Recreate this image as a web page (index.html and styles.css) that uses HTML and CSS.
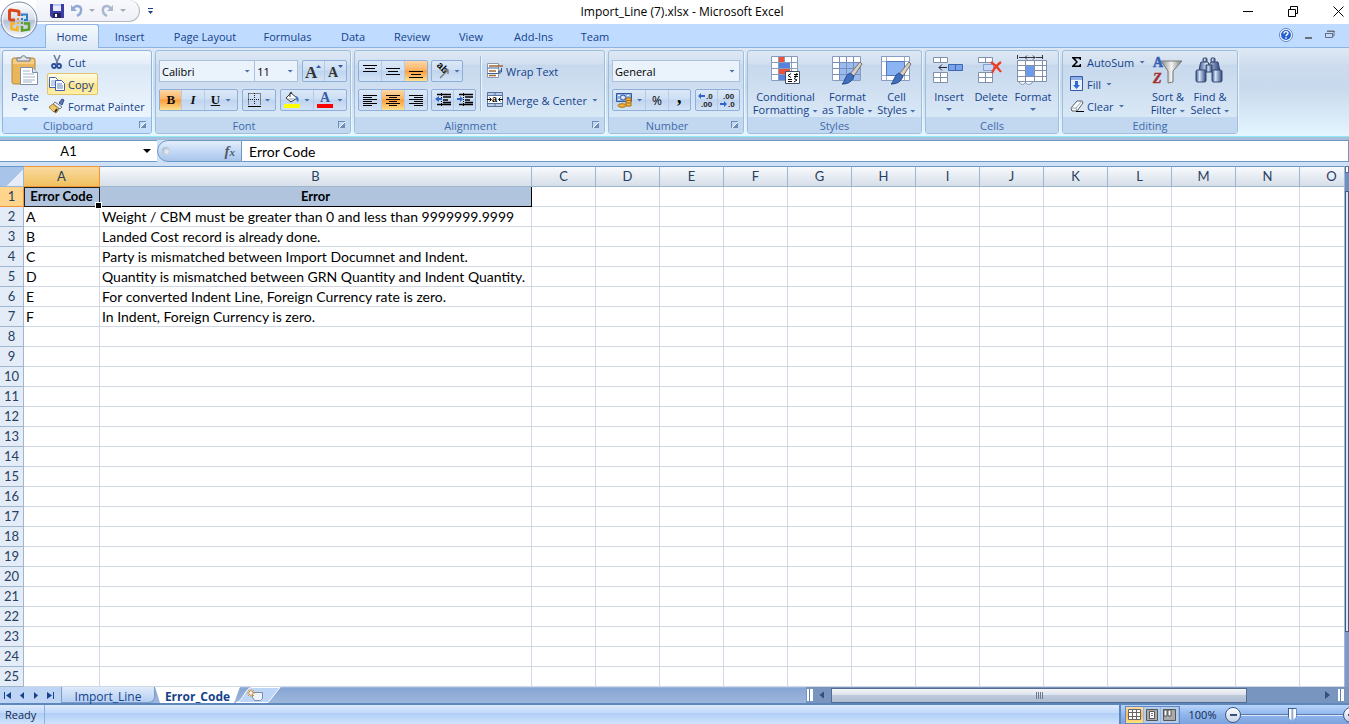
FILE: index.html
```
<!DOCTYPE html>
<html lang="en">
<head>
<meta charset="utf-8">
<title>Import_Line (7).xlsx - Microsoft Excel</title>
<link rel="stylesheet" href="styles.css">
</head>
<body>
<div class="app">
  <header class="titlebar">
    <div class="qat">
      <button aria-label="Save"><svg width="14" height="14" viewBox="0 0 14 14"><path d="M0 0h14v14H2l-2-2z" fill="#3d3da6"/><path d="M3 0h8v7H3z" fill="#e6ecfa"/><path d="M3 0h8v2H3z" fill="#b8c8ee"/><path d="M3 9h8v5H3z" fill="#23235f"/><path d="M5 10h2v3H5z" fill="#fff"/></svg></button>
      <button aria-label="Undo"><svg width="13" height="13" viewBox="0 0 13 13"><path d="M1 1v6h6z" fill="#93a9cf"/><path d="M3 5C6 0 12 2 11 7c0 3-2 4-4 5" fill="none" stroke="#93a9cf" stroke-width="2.400"/></svg></button>
      <i class="ar gray"></i>
      <button aria-label="Redo"><svg width="13" height="13" viewBox="0 0 13 13"><path d="M12 1v6H6z" fill="#a9b8d0"/><path d="M10 5C7 0 1 2 2 7c0 3 2 4 4 5" fill="none" stroke="#a9b8d0" stroke-width="2.400"/></svg></button>
      <i class="ar gray"></i>
    </div>
    <button class="more" aria-label="Customize Quick Access Toolbar"><svg width="5" height="6" viewBox="0 0 5 6"><path d="M0 0h5v1H0zM0 3h5L2.500 6z" fill="#1e3f86"/></svg></button>
    <h1>Import_Line (7).xlsx - Microsoft Excel</h1>
    <div class="winbtns">
      <button aria-label="Minimize"><svg width="11" height="11" viewBox="0 0 11 11"><path d="M0 5h10v1H0z"/></svg></button>
      <button aria-label="Restore"><svg width="11" height="11" viewBox="0 0 11 11" fill="none" stroke="#000"><path d="M.5 3.500h7v7h-7zM2.500 3V.5h7v7H8"/></svg></button>
      <button aria-label="Close"><svg width="11" height="11" viewBox="0 0 11 11" fill="none" stroke="#000"><path d="M.5.5l10 10M10.500.5l-10 10"/></svg></button>
    </div>
    <button class="office" aria-label="Office Button"><svg width="39" height="40" viewBox="0 0 39 40">
      <defs><linearGradient id="orb" x1="0" y1="0" x2="0" y2="1"><stop offset="0" stop-color="#fff"/><stop offset=".48" stop-color="#d8deea"/><stop offset=".52" stop-color="#b4bfd4"/><stop offset="1" stop-color="#fafcff"/></linearGradient></defs>
      <circle cx="19" cy="20" r="18" fill="url(#orb)" stroke="#7588a8"/><circle cx="19" cy="20" r="16.500" fill="none" stroke="#fff" opacity=".8"/>
      <g fill="none" stroke-width="3"><path d="M15 20H11q-1.500 0-1.500-1.500V11q0-1 1-1l7 1q1.500 0 1.500 1.500V16" stroke="#d9481c"/><path d="M22 16v-1.500h5V20h-3" stroke="#2c7fc8" stroke-width="2"/><path d="M15 23.500h-3.500V29l6 1.200V26" stroke="#f4b51e" stroke-width="2.500"/><path d="M22 26v4.500l7-1v-6h-5" stroke="#5a9e2c" stroke-width="2.500"/></g>
      <path d="M17 18h2v2h-2z" fill="#e88a2a"/><path d="M21 18h2v2h-2z" fill="#2c7fc8"/><path d="M17 22h2v2h-2z" fill="#f4b51e"/><path d="M21 22h2v2h-2z" fill="#5a9e2c"/></svg></button>
  </header>

  <nav class="tabs">
    <button class="tab on">Home</button><button class="tab t2">Insert</button><button class="tab t3">Page Layout</button><button class="tab t4">Formulas</button><button class="tab t5">Data</button><button class="tab t6">Review</button><button class="tab t5">View</button><button class="tab t7">Add-Ins</button><button class="tab t8">Team</button>
    <div class="docbtns">
      <button aria-label="Help"><svg width="14" height="14" viewBox="0 0 14 14"><circle cx="7" cy="7" r="6.500" fill="#fff" stroke="#5c86c4"/><circle cx="7" cy="7" r="5" fill="#2460cf"/><path d="M5 5.500C5 3 9 3 9 5.200 9 6.600 7 6.600 7 8.200M7 9.300v1.400" fill="none" stroke="#fff" stroke-width="1.400"/></svg></button>
      <button aria-label="Minimize window"><svg width="8" height="10" viewBox="0 0 8 10"><path d="M0 7h7v2H0z" fill="#6a6f7a"/></svg></button>
      <button aria-label="Restore window"><svg width="10" height="10" viewBox="0 0 10 10"><path d="M2 1h7v5H8M.5 3.500h7v4h-7z" fill="none" stroke="#6a6f7a"/><path d="M2 1h8v1H2zM0 3h8v1H0z" fill="#6a6f7a"/></svg></button>
    </div>
  </nav>

  <main class="ribbon">
    <section class="group clip">
      <div class="body">
        <button class="big paste"><svg width="28" height="32" viewBox="0 0 28 32"><rect x="1" y="3" width="23" height="26" rx="2" fill="#e9b65c" stroke="#b98a3d"/><path d="M2 4h21v5H2z" fill="#f4cd86"/><path d="M6 6V3h4c0-3 5-3 5 0h4v3z" fill="#dfe3ea" stroke="#6d7684"/><path d="M9.500 12.500h12l5 5v12h-17z" fill="#fff" stroke="#7d8da6"/><path d="M21.500 12.500v5h5" fill="#dbe4f1" stroke="#7d8da6"/><path d="M12 16h7M12 19h11M12 22h12M12 25h12M12 27h9" stroke="#9fb2cc"/></svg><span>Paste</span><i class="ar"></i></button>
        <div class="list">
          <button class="cmd"><svg width="16" height="16" viewBox="0 0 16 16"><path d="M5 1l4 9M11 1L7 10" stroke="#6b7f9c" stroke-width="1.600"/><circle cx="5" cy="12" r="2" fill="none" stroke="#2a4f97" stroke-width="1.800"/><circle cx="10" cy="12" r="2" fill="none" stroke="#2a4f97" stroke-width="1.800"/></svg>Cut</button>
          <button class="cmd hot"><svg width="16" height="16" viewBox="0 0 16 16"><path d="M.5 1.500h6l2 2v8h-8z" fill="#fff" stroke="#3e64ad"/><path d="M2 5h4M2 7h4M2 9h4" stroke="#7fa0d8"/><path d="M6.500 4.500h6l3 3v7h-9z" fill="#fff" stroke="#3e64ad"/><path d="M8 8h5M8 10h6M8 12h6" stroke="#5a83cb"/></svg>Copy</button>
          <button class="cmd"><svg width="16" height="16" viewBox="0 0 16 16"><path d="M10 5l3-4 2 1-2 5z" fill="#6077b8" stroke="#36488a"/><path d="M6 4l7 5-2 2-7-5z" fill="#e8ecf2" stroke="#707a8a"/><path d="M4 6l6 5-3 4c-2-1-5-3-7-6z" fill="#f0c766" stroke="#a8823c"/><path d="M6 14l2-3" stroke="#333" stroke-width="2"/></svg>Format Painter</button>
        </div>
      </div>
      <footer>Clipboard<button class="dlg" aria-label="Clipboard options"></button></footer>
    </section>

    <section class="group font">
      <div class="body rows">
        <div class="row">
          <div class="combos"><label class="combo name"><input value="Calibri" aria-label="Font"><i class="ar"></i></label><label class="combo size"><input value="11" aria-label="Font size"><i class="ar"></i></label></div>
          <div class="set w45"><button aria-label="Grow font"><b class="glyph g17">A</b><i class="up"></i></button><button aria-label="Shrink font"><b class="glyph g13">A</b><i class="dn"></i></button></div>
        </div>
        <div class="row">
          <div class="set w79"><button class="on" aria-label="Bold"><b class="glyph">B</b></button><button aria-label="Italic"><em class="glyph">I</em></button><button class="wide" aria-label="Underline"><u class="glyph">U</u><i class="ar"></i></button></div>
          <div class="set w34"><button aria-label="Borders"><svg width="13" height="14" viewBox="0 0 13 14"><path d="M.5.5h12v12M.5.5v12M6.500 0v12M0 6.500h12" fill="none" stroke="#222" stroke-dasharray="1 1"/><path d="M0 13.500h13" stroke="#000"/></svg><i class="ar"></i></button></div>
          <div class="set w67"><button aria-label="Fill color"><svg width="16" height="16" viewBox="0 0 16 16"><path d="M7 1l6 5-6 4-5-4z" fill="#fff" stroke="#333"/><path d="M4 6h7l-4 3z" fill="#bcc9de"/><path d="M6 5V1c0-1 2-1 2 0" fill="none" stroke="#333"/><path d="M12 4c3 1 3 4 2 6-2-1-2-3-2-6z" fill="#3d7bd0"/><path d="M0 12h16v4H0z" fill="#ff0"/></svg><i class="ar"></i></button><button aria-label="Font color"><span class="fc">A</span><i class="ar"></i></button></div>
        </div>
      </div>
      <footer>Font<button class="dlg" aria-label="Font options"></button></footer>
    </section>

    <section class="group align">
      <div class="body">
        <div class="rows">
          <div class="row">
            <div class="set w69"><button aria-label="Top align"><svg width="15" height="14" viewBox="0 0 15 14"><path d="M0 1.500h14M2 4.500h10M0 7.500h14" stroke="#000"/></svg></button><button aria-label="Middle align"><svg width="15" height="14" viewBox="0 0 15 14"><path d="M0 4.500h14M2 7.500h10M0 10.500h14" stroke="#000"/></svg></button><button class="on" aria-label="Bottom align"><svg width="15" height="14" viewBox="0 0 15 14"><path d="M0 7.500h14M2 10.500h10M0 13.500h14" stroke="#000"/></svg></button></div>
            <div class="set w32"><button aria-label="Orientation"><svg width="16" height="16" viewBox="0 0 16 16"><g transform="rotate(45 8 7)"><text x="1" y="8" font-family="Liberation Sans" font-weight="700" font-size="10">ab</text></g><path d="M6 15l8-8M14 11V7h-4" fill="none" stroke="#777" stroke-width="1.300"/></svg><i class="ar"></i></button></div>
          </div>
          <div class="row">
            <div class="set w69"><button aria-label="Align left"><svg width="15" height="13" viewBox="0 0 15 13"><path d="M0 1.500h14M0 3.500h9M0 5.500h14M0 7.500h9M0 9.500h14M0 11.500h9" stroke="#000"/></svg></button><button class="on" aria-label="Center"><svg width="15" height="13" viewBox="0 0 15 13"><path d="M0 1.500h14M3 3.500h8M0 5.500h14M3 7.500h8M0 9.500h14M3 11.500h8" stroke="#000"/></svg></button><button aria-label="Align right"><svg width="15" height="13" viewBox="0 0 15 13"><path d="M0 1.500h14M5 3.500h9M0 5.500h14M5 7.500h9M0 9.500h14M5 11.500h9" stroke="#000"/></svg></button></div>
            <div class="set w45"><button aria-label="Decrease indent"><svg width="16" height="14" viewBox="0 0 16 14"><path d="M2 1.500h14M8 4h8M8 7h5M8 9.500h8M2 11.500h14" stroke="#000" stroke-width="1.300"/><path d="M6.500 0v14" stroke="#000" stroke-dasharray="1 1"/><path d="M0 6l4-3v2h3v2H4v2z" fill="#3365c8"/></svg></button><button aria-label="Increase indent"><svg width="16" height="14" viewBox="0 0 16 14"><path d="M2 1.500h14M8 4h8M8 7h5M8 9.500h8M2 11.500h14" stroke="#000" stroke-width="1.300"/><path d="M6.500 0v14" stroke="#000" stroke-dasharray="1 1"/><path d="M6 6L3 3v2H0v2h3v2z" fill="#3365c8"/></svg></button></div>
          </div>
        </div>
        <div class="rows textcmds">
          <button class="cmd"><svg width="16" height="16" viewBox="0 0 16 16"><path d="M.5.5h11v14H.5z" fill="#fff" stroke="#8c99ae"/><path d="M.5 5h11M.5 10.500h11" stroke="#3f5e92"/><path d="M2 3h14M2 8h7M2 12.500h7" stroke="#9a6a35" stroke-width="1.300"/><path d="M14.500 5v4M14.500 9h-3l2-2M11.500 9l2 2" fill="none" stroke="#2b4f93"/></svg>Wrap Text</button>
          <button class="cmd"><svg width="16" height="16" viewBox="0 0 16 16"><path d="M.5.5h15v14H.5z" fill="#b9c9e3" stroke="#56739f"/><path d="M1 4h14v7H1z" fill="#fff"/><path d="M8 1v3M8 11v3" stroke="#56739f"/><path d="M.5 3.500h15M.5 11.500h15" stroke="#56739f"/><path d="M0 7.500h4M12 7.500h4M2.500 5.500l2 2-2 2M13.500 5.500l-2 2 2 2" fill="none" stroke="#000"/><text x="5" y="10" font-family="Liberation Sans" font-size="9" font-weight="700">a</text></svg>Merge &amp; Center<i class="ar"></i></button>
        </div>
      </div>
      <footer>Alignment<button class="dlg" aria-label="Alignment options"></button></footer>
    </section>

    <section class="group number">
      <div class="body rows">
        <label class="combo"><input value="General" aria-label="Number format"><i class="ar"></i></label>
        <div class="row">
          <div class="set w79"><button class="wide" aria-label="Accounting format"><svg width="16" height="16" viewBox="0 0 16 16"><path d="M.5 1.500h15v8H.5z" fill="#8fb0e6" stroke="#2f559f"/><circle cx="7" cy="5.500" r="2.500" fill="#dfe9fa" stroke="#2f559f"/><path d="M2 3.500h2M11 3.500h2M2 7.500h2" stroke="#fff"/><path d="M10 6h5v8h-5z" fill="#f2b640" stroke="#a86e12"/><path d="M10 8.500h5M10 11h5" stroke="#a86e12"/><ellipse cx="6" cy="13.500" rx="4" ry="1.800" fill="#f2b640" stroke="#a86e12"/></svg><i class="ar"></i></button><button class="pc" aria-label="Percent">%</button><button aria-label="Comma"><b class="comma">,</b></button></div>
          <div class="set w45"><button aria-label="Increase decimal"><svg width="17" height="14" viewBox="0 0 17 14"><text x="8" y="6" class="dec">.0</text><text x="3" y="14" class="dec">.00</text><path d="M0 3l3-3v2h4v2H3v2z" fill="#3365c8"/></svg></button><button aria-label="Decrease decimal"><svg width="17" height="14" viewBox="0 0 17 14"><text x="3" y="6" class="dec">.00</text><text x="8" y="14" class="dec">.0</text><path d="M7 11L4 8v2H0v2h4v2z" fill="#3365c8"/></svg></button></div>
        </div>
      </div>
      <footer>Number<button class="dlg" aria-label="Number options"></button></footer>
    </section>

    <section class="group styles">
      <div class="body">
        <button class="big b69"><svg width="32" height="32" viewBox="0 0 32 32"><path d="M1.500 1.500h26v24h-26z" fill="#fff" stroke="#8a9cbd"/><path d="M8 2h6v5H8zM8 13h12v6H8z" fill="#f0513a"/><path d="M8 7h12v6H8zM8 19h7v6H8z" fill="#5583dd"/><path d="M2 7.500h26M2 13.500h26M2 19.500h26M8.500 2v23M14.500 2v5M21.500 2v23" stroke="#8a9cbd"/><path d="M15.500 16.500h14v12h-14z" fill="#fff" stroke="#44506a"/><path d="M21 18.500l-3 2 3 2M18 24.500h4M18 26.500h4M24 19.500h4M24 21.500h4M27 18l-2 5M24 23.500l3 1.500-3 2" fill="none" stroke="#000"/></svg><span>Conditional</span><span>Formatting <i class="ar"></i></span></button>
        <button class="big b54"><svg width="32" height="32" viewBox="0 0 32 32"><path d="M.5 1.500h28v24H.5z" fill="#fff" stroke="#8a9cbd"/><path d="M7 8h21v17H7z" fill="#9bbcf0"/><path d="M1 7.500h27M1 13.500h27M1 19.500h27M7.500 2v23M14.500 2v23M21.500 2v23" stroke="#758db8"/><path d="M28 7l2 2-8 12-4-2z" fill="#d6d0c6" stroke="#77706a"/><path d="M18 18l4 3c-2 6-6 8-12 8 3-2 3-9 8-11z" fill="#3f70be" stroke="#274c8b"/></svg><span>Format</span><span>as Table <i class="ar"></i></span></button>
        <button class="big b41"><svg width="32" height="32" viewBox="0 0 32 32"><path d="M.5 1.500h28v24H.5z" fill="#fff" stroke="#8a9cbd"/><path d="M1 6.500h27M1 20.500h27M5.500 2v23M23.500 2v23" stroke="#a4b1ca"/><path d="M5.500 6.500h18v14h-18z" fill="#8db4f2" stroke="#5279bd"/><path d="M28 7l2 2-8 12-4-2z" fill="#d6d0c6" stroke="#77706a"/><path d="M18 18l4 3c-2 6-6 8-12 8 3-2 3-9 8-11z" fill="#3f70be" stroke="#274c8b"/></svg><span>Cell</span><span>Styles <i class="ar"></i></span></button>
      </div>
      <footer>Styles</footer>
    </section>

    <section class="group cells">
      <div class="body">
        <button class="big b42"><svg width="32" height="32" viewBox="0 0 32 32"><path d="M.5 2.500h14v5H.5zM7.500 2.500v5M.5 17.500h14v10H.5zM7.500 17.500v10M.5 22.500h14" fill="#fff" stroke="#8190ab"/><path d="M15.500 9.500h14v6h-14zM22.500 9.500v6" fill="#78a2ea" stroke="#3f66b1"/><path d="M6 12.500h8M9 9.500l-3 3 3 3" fill="none" stroke="#223"/></svg><span>Insert</span><i class="ar"></i></button>
        <button class="big b42"><svg width="32" height="32" viewBox="0 0 32 32"><path d="M3.500 2.500h14v5h-14zM10.500 2.500v5M3.500 17.500h14v10h-14zM10.500 17.500v10M3.500 22.500h14" fill="#fff" stroke="#8190ab"/><path d="M8.500 9.500h10v6h-10z" fill="#c6d8f6" stroke="#3f66b1" stroke-dasharray="1 1"/><path d="M16 7c3 2 8 7 10 10M26 7c-4 3-7 6-9 11" stroke="#ee3c22" stroke-width="2.200" fill="none"/></svg><span>Delete</span><i class="ar"></i></button>
        <button class="big b42"><svg width="32" height="32" viewBox="0 0 32 32"><path d="M.5 5.500h29v21H.5z" fill="#fff" stroke="#8190ab"/><path d="M1 10.500h28M1 21.500h28M8.500 6v20M17.500 6v20M25.500 6v20M1 15.500h8M17 15.500h12" stroke="#8190ab"/><path d="M9 11h8v10H9z" fill="#6d9ae9"/><path d="M.5 0v4M25.500 0v4M2 2.500h6M19 2.500h6M8 2.500h10M10 .5l-2 2 2 2M16 .5l2 2-2 2" fill="none" stroke="#334"/><path d="M2.500 27c0 3 6 3 6 0M8.500 27c0 3 6 3 7 0" fill="#fff" stroke="#8190ab"/></svg><span>Format</span><i class="ar"></i></button>
      </div>
      <footer>Cells</footer>
    </section>

    <section class="group edit">
      <div class="body">
        <div class="list">
          <button class="cmd"><svg width="14" height="14" viewBox="0 0 14 14"><path d="M2 2h9v3h-1L9 3.500H5L8 7l-3.500 3.500H9L10 9h1v3H2v-1l4-4-4-4z" fill="#000"/></svg>AutoSum<i class="ar"></i></button>
          <button class="cmd"><svg width="14" height="16" viewBox="0 0 14 16"><path d="M.5.5h12v14H.5z" fill="#e7effb" stroke="#345aa5"/><path d="M1 1h11v3H1z" fill="#8fb0e6"/><path d="M5 5h3v4h2l-3.500 4L3 9h2z" fill="#2f6bd8"/></svg>Fill<i class="ar"></i></button>
          <button class="cmd"><svg width="14" height="14" viewBox="0 0 14 14"><path d="M1 9l6-7h5l1 2-6 8H2z" fill="#fff" stroke="#555e6c"/><path d="M1 9h5l6-7M6 9l1 3" fill="none" stroke="#9aa3b0"/><path d="M6 12.500h8" stroke="#000"/></svg>Clear<i class="ar"></i></button>
        </div>
        <button class="big b42"><svg width="32" height="32" viewBox="0 0 32 32"><defs><linearGradient id="fun"><stop offset="0" stop-color="#8a8a8a"/><stop offset=".5" stop-color="#f2f2f2"/><stop offset="1" stop-color="#777"/></linearGradient></defs><path d="M9 6h21l-9 10v11l-5 1V16z" fill="url(#fun)" stroke="#777"/><text x="1" y="12" font-family="Liberation Serif" font-size="14" font-weight="700" fill="#3560b3" stroke="#3560b3" stroke-width=".5">A</text><text x="1" y="28" font-family="Liberation Serif" font-size="14" font-weight="700" font-style="italic" fill="#a42f30" stroke="#a42f30" stroke-width=".5">Z</text></svg><span>Sort &amp;</span><span>Filter <i class="ar"></i></span></button>
        <button class="big b42"><svg width="32" height="32" viewBox="0 0 32 32"><defs><linearGradient id="bin"><stop offset="0" stop-color="#38558f"/><stop offset=".35" stop-color="#d4e0f4"/><stop offset="1" stop-color="#2d477f"/></linearGradient></defs><g stroke="#34486f" fill="url(#bin)"><rect x="9" y="3" width="4" height="4" rx="1"/><rect x="17" y="3" width="4" height="4" rx="1"/><path d="M7 7h7l1 3v6H5l1-6zM17 7h7l2 9H15v-6z"/><path d="M12 10h6v7h-6z"/><rect x="2" y="15" width="10" height="12" rx="1.500"/><rect x="18" y="15" width="10" height="12" rx="1.500"/></g></svg><span>Find &amp;</span><span>Select <i class="ar"></i></span></button>
      </div>
      <footer>Editing</footer>
    </section>
  </main>

  <div class="formula">
    <label class="namebox"><input value="A1" aria-label="Name box"><i class="ar black"></i></label>
    <div class="fx"><span class="dot"></span><button aria-label="Insert function">f<small>x</small></button></div>
    <input class="fbar" value="Error Code" aria-label="Formula bar">
  </div>

  <div class="work">
    <div class="sheet"><table id="grid"></table></div>
    <div class="vscroll"><span class="vsplit"></span><span class="vup"></span><span class="vthumb"></span></div>
  </div>

  <div class="sheetbar">
    <div class="navs">
      <button aria-label="First sheet"><svg width="8" height="7" viewBox="0 0 8 7"><path d="M0 0h1v7H0zM7 0v7L2 3.500z"/></svg></button>
      <button aria-label="Previous sheet"><svg width="8" height="7" viewBox="0 0 8 7"><path d="M6 0v7L2 3.500z"/></svg></button>
      <button aria-label="Next sheet"><svg width="8" height="7" viewBox="0 0 8 7"><path d="M2 0v7l4-3.500z"/></svg></button>
      <button aria-label="Last sheet"><svg width="8" height="7" viewBox="0 0 8 7"><path d="M7 0h1v7H7zM1 0v7l5-3.500z"/></svg></button>
    </div>
    <button class="st">Import_Line</button><button class="st cur">Error_Code</button>
    <button class="newtab" aria-label="Insert worksheet"><svg width="44" height="16" viewBox="0 0 44 16"><path d="M0 15.500C7 15 9 .5 16 .5h28L32 15.500z" fill="#bdd5f7" stroke="#fff"/><path d="M16.500 5.500h10v6l-2 2h-6l-2-3z" fill="#eef3fb" stroke="#7d8ba5"/><path d="M15 2v8M11 6h8M12 3l6 6M18 3l-6 6" stroke="#dc9422"/><circle cx="15" cy="6" r="1.500" fill="#fff"/></svg></button>
    <div class="hscroll"><span class="split"></span><button class="la" aria-label="Scroll left"></button><span class="track"><span class="thumb"><i></i><i></i><i></i><i></i></span></span><button class="ra" aria-label="Scroll right"></button><span class="split"></span></div>
  </div>

  <footer class="status">
    <span class="ready">Ready</span>
    <div class="tools">
      <div class="views">
        <button class="on" aria-label="Normal view"><svg width="13" height="12" viewBox="0 0 13 12"><path d="M.5.5h12v10H.5zM.5 3.500h12M.5 7.500h12M4.500 1v10M8.500 1v10" fill="#fff" stroke="#666"/></svg></button><button aria-label="Page layout view"><svg width="13" height="12" viewBox="0 0 13 12"><path d="M.5.5h11v11H.5z" fill="#aaa" stroke="#555"/><path d="M3.500 2.500h5v7h-5z" fill="#fff" stroke="#555"/><path d="M5 4.500h2M5 6.500h2" stroke="#777"/></svg></button><button aria-label="Page break view"><svg width="13" height="12" viewBox="0 0 13 12"><path d="M.5.5h12v11H.5z" fill="#aaa" stroke="#555"/><path d="M1 1h3v6H1zM5 1h3v6H5z" fill="#fff" stroke="#555"/></svg></button>
      </div>
      <button class="pct">100%</button>
      <button class="zb" aria-label="Zoom out"></button>
      <label class="zoom"><input type="range" min="10" max="190" value="100" aria-label="Zoom"></label>
      <button class="zb" aria-label="Zoom in"></button>
    </div>
  </footer>
</div>
<script src="grid.js"></script>
</body>
</html>
```
FILE: grid.js
```
const rows = [
  ["Error Code", "Error"],
  ["A", "Weight / CBM must be greater than 0 and less than 9999999.9999"],
  ["B", "Landed Cost record is already done."],
  ["C", "Party is mismatched between Import Documnet and Indent."],
  ["D", "Quantity is mismatched between GRN Quantity and Indent Quantity."],
  ["E", "For converted Indent Line, Foreign Currency rate is zero."],
  ["F", "In Indent, Foreign Currency is zero."]
];
const cols = "ABCDEFGHIJKLMNO".split("");
let html = '<colgroup><col class="c0"><col class="ca"><col class="cb">' + '<col class="cc">'.repeat(13) + "</colgroup>";
html += '<thead><tr><th class="corner"></th>' + cols.map((c, i) => `<th class="${i ? "" : "sel"}">${c}</th>`).join("") + "</tr></thead><tbody>";
for (let r = 0; r < 25; r++) {
  html += `<tr><th class="${r ? "" : "sel"}">${r + 1}</th>`;
  html += cols.map((c, i) => {
    const cls = r === 0 && i < 2 ? (i ? "head" : "head active") : "";
    return `<td class="${cls}">${(rows[r] && rows[r][i]) || ""}</td>`;
  }).join("") + "</tr>";
}
document.getElementById("grid").innerHTML = html + "</tbody>";
```
FILE: styles.css
```
* { box-sizing: border-box; }
html, body { height: 100%; margin: 0; }
body { font: 11px/13px "Open Sans", sans-serif; color: #15428b; overflow: hidden; background: #fff; }
button { font: inherit; color: inherit; background: none; border: 0; padding: 0; margin: 0; white-space: nowrap; }
input { font: inherit; color: #000; background: none; border: 0; padding: 0; margin: 0; min-width: 0; outline: 0; }
svg { display: block; flex: none; overflow: visible; }
.app { height: 100vh; display: flex; flex-direction: column; }

.ar { display: inline-block; flex: none; width: 6px; height: 3px; background: #4a70ac; clip-path: polygon(0 0, 100% 0, 50% 100%); vertical-align: middle; }
.ar.gray { background: #a5a9b2; }
.ar.black { width: 8px; height: 4px; background: #000; }

.titlebar { position: relative; height: 24px; flex: none; display: flex; align-items: center; background: #fff; padding: 0 0 2px 36px; }
.qat { display: flex; align-items: center; gap: 6px; width: 104px; height: 22px; padding-left: 14px; border: 1px solid #b4b8c0; border-top: 0; border-left: 0; border-radius: 0 12px 12px 0; background: linear-gradient(#f8f9fc, #eef1f7); }
.more { margin-left: 8px; }
.titlebar h1 { flex: 1; margin: 0; padding-right: 32px; font-size: 12px; font-weight: 400; color: #000; text-align: center; }
.winbtns { display: flex; gap: 34px; padding-right: 5px; }
.office { position: absolute; left: 0; top: 0; z-index: 2; }

.tabs { height: 24px; flex: none; display: flex; background: #bfdbff; border-bottom: 1px solid #8db2e3; padding-left: 45px; }
.tab { height: 23px; padding: 2px 0 0; width: 61px; }
.tab.on { width: 54px; height: 24px; border: 1px solid #8db2e3; border-bottom: 0; border-radius: 3px 3px 0 0; background: linear-gradient(#f5f9fe, #dde9f7); padding: 0; }
.t3 { width: 90px; } .t4 { width: 75px; } .t5 { width: 56px; } .t6 { width: 62px; } .t7 { width: 69px; } .t8 { width: 54px; }
.docbtns { margin-left: auto; display: flex; align-items: center; gap: 12px; padding: 0 14px 2px 0; }

.ribbon { flex: none; display: flex; gap: 3px; height: 89px; padding: 2px 2px 2px; background: linear-gradient(#dfe9f5, #cddcee 20%, #c8d9ed 45%, #e4f6ff); border-bottom: 1px solid #8ee9f0; }
.group { display: flex; flex-direction: column; border: 1px solid #9ebfdb; border-radius: 3px; background: linear-gradient(#dee8f5 0, #d1dfef 16%, #c7d8ed 17%, #d9e8f6 80%); box-shadow: 1px 1px 0 #ecf4fc; overflow: hidden; }
.group .body { flex: 1; display: flex; min-height: 0; }
.group footer { position: relative; height: 16px; line-height: 17px; text-align: center; background: #c2d8f0; color: #3e6aaa; padding-right: 18px; }
.styles footer, .cells footer, .edit footer { padding: 0; }
.dlg { position: absolute; right: 5px; top: 4px; width: 7px; height: 7px; border-left: 1px solid #6d8db8; border-top: 1px solid #6d8db8; background: linear-gradient(135deg, transparent 45%, #fff 45%, #fff 55%, #6d8db8 55%); }
.clip { width: 150px; background: linear-gradient(#f2f7fd 0, #e4edf8 16%, #dae7f6 17%, #ecf5fd 80%); border-color: #8fb6e0; }
.clip footer { background: #c6dffc; }
.font { width: 196px; } .align { width: 251px; } .number { width: 136px; } .styles { width: 175px; } .cells { width: 134px; } .edit { width: 176px; }

.big { display: flex; flex-direction: column; align-items: center; width: 42px; padding-top: 4px; }
.big svg { margin-bottom: 3px; }
.big .ar { margin-top: 5px; }
.big span .ar { margin: 0; }
.b69 { width: 69px; } .b54 { width: 55px; } .b41 { width: 43px; }
.styles .body { padding-left: 3px; } .cells .body { padding-left: 2px; }
.paste { width: 44px; }
.list { display: flex; flex-direction: column; }
.cmd { display: flex; align-items: center; gap: 3px; height: 22px; padding: 0 3px 0 2px; align-self: flex-start; }
.cmd .ar { margin-left: 2px; }
.hot { border: 1px solid #dfc46c; border-radius: 2px; background: linear-gradient(#fffbe4, #ffefb0 45%, #ffe184 50%, #fff0a8); padding-left: 1px; }
.edit .list { width: 84px; padding-left: 5px; }

.rows { display: flex; flex-direction: column; gap: 7px; padding: 9px 3px 0; }
.group .body.rows { flex-direction: column; }
.row { display: flex; gap: 4px; }
.align .row { gap: 3px; }
.align .rows { padding-right: 0; }
.align .textcmds { border-left: 1px solid #9bb8dd; margin: 5px 0 6px 4px; padding: 4px 0 0 4px; box-shadow: inset 1px 0 0 #edf5fd; }
.combos { display: flex; width: 140px; }
.combo { display: flex; align-items: center; height: 22px; padding: 0 4px 0 2px; background: #eaf2fb; border: 1px solid #abc1de; color: #000; }
.combo input { flex: 1; width: 0; }
.combo.name { flex: 1; }
.combo.size { width: 43px; border-left-width: 0; }
.set { display: flex; height: 22px; border: 1px solid #8eaedb; border-radius: 2px; background: linear-gradient(#dce8f7, #cddff4 45%, #bfd4ee 50%, #d3e3f6); color: #000; }
.set button { position: relative; flex: 1; display: flex; align-items: center; justify-content: center; gap: 5px; border-right: 1px solid #b3cae8; }
.set button:last-child { border-right: 0; }
.set button.wide { flex: 1.5; }
.set .on { background: linear-gradient(#fbd7a8, #fdb463 45%, #fb9c3b 50%, #ffe18e); }
.w45 { width: 45px; } .w79 { width: 79px; } .w34 { width: 34px; } .w67 { width: 67px; } .w69 { width: 70px; } .w32 { width: 32px; }
.w34 button, .w67 button, .w32 button { gap: 4px; }
.glyph { font: bold 13px/16px "Liberation Serif", serif; color: #111; }
em.glyph { font-style: italic; }
.g17 { font-size: 17px; } .g13 { font-size: 14px; }
.g17, .g13 { padding: 3px 5px 0 0; color: #333; }
.up, .dn { position: absolute; right: 3px; top: 4px; width: 5px; height: 3px; background: #345ba5; clip-path: polygon(50% 0, 100% 100%, 0 100%); }
.dn { clip-path: polygon(0 0, 100% 0, 50% 100%); }
.fc { font: bold 14px/12px "Liberation Serif", serif; color: #345ba5; width: 16px; border-bottom: 4px solid #f00; }
.set .pc { font-size: 12px; }
.comma { font: bold 18px/10px "Liberation Serif", serif; padding-bottom: 6px; }
.dec { font: bold 8px "Liberation Sans", sans-serif; fill: #222; }

.formula { flex: none; display: flex; height: 29px; padding: 3px 0 4px; background: linear-gradient(#a7bedd 0, #a7bedd 3px, #cfe1f7 3px); font: 14px/20px Lato, sans-serif; }
.formula input { height: 20px; }
.namebox { display: flex; align-items: center; width: 157px; padding-right: 6px; background: #fff; border: solid #6f97c4; border-width: 1px 0; font-size: 13px; }
.namebox input { flex: 1; text-align: center; padding-right: 6px; }
.fx { display: flex; align-items: center; justify-content: space-between; width: 85px; padding: 0 6px 0 4px; border: 1px solid #6f97c4; border-radius: 11px 0 0 11px; background: linear-gradient(#e3eefc, #c7dbf5 45%, #a8c6ec); }
.dot { width: 8px; height: 8px; border-radius: 50%; background: radial-gradient(circle at 60% 60%, #eef3fa, #93a4c0); }
.fx button { font: italic bold 15px/18px "Liberation Serif", serif; color: #505b6e; }
.fx small { font-size: 11px; }
.formula .fbar { flex: 1; height: 22px; padding-left: 7px; background: #fff; border: 1px solid #6f97c4; border-left: 0; }

.work { flex: 1; min-height: 0; display: flex; }
.sheet { flex: 1; min-width: 0; overflow: hidden; }
#grid { width: 1364px; table-layout: fixed; border-collapse: separate; border-spacing: 0; font: 14px/19px Lato, sans-serif; color: #000; }
.c0 { width: 24px; } .ca { width: 76px; } .cb { width: 432px; } .cc { width: 64px; }
#grid td, #grid th { height: 20px; padding: 0 2px; border: solid #d0d7e5; border-width: 0 1px 1px 0; white-space: nowrap; overflow: hidden; }
#grid th { padding: 0; font-size: 13px; font-weight: 400; color: #28405f; background: #e4ecf7; border-color: #9eb6ce; }
#grid thead th { height: 21px; background: linear-gradient(#f8fafc, #d6dee9); border-top: 1px solid #6f97c4; }
#grid thead th.corner { background: linear-gradient(135deg, #a9c4e9 60%, #e6edf8 60%); }
#grid th.sel, #grid thead th.sel { background: linear-gradient(#f9d99f, #f1c15f); border-color: #f29536; }
#grid tbody th.sel { background: #ffd58d; }
#grid td.head { background: #b0c4de; border-color: #000; font-size: 13px; font-weight: 700; text-align: center; }
#grid td.active { position: relative; overflow: visible; outline: 1px solid #222; outline-offset: -1px; }
#grid td.active::after { content: ""; position: absolute; right: -3px; bottom: -3px; width: 5px; height: 5px; background: #000; border: 1px solid #fff; z-index: 1; }
.vscroll { width: 5px; display: flex; flex-direction: column; background: #7b9ac7; border-left: 1px solid #9db9df; }
.vsplit { height: 7px; background: #fff; border: 1px solid #54749f; }
.vup { height: 18px; background: #6f90bf; }
.vthumb { height: 441px; background: #dfe6f0; border: 1px solid #44597c; }

.sheetbar { flex: none; display: flex; height: 18px; background: linear-gradient(#a9c6ec 0, #86a5d3 1px, #9db7dd); border-bottom: 2px solid #5d87bd; }
.navs { display: flex; align-items: center; gap: 6px; width: 61px; padding-left: 4px; background: #bdd4f5; fill: #15428b; }
.st { width: 94px; padding-top: 1px; font-size: 12px; line-height: 17px; background: linear-gradient(#dfeafa, #b5cff3); border: solid #7f9dc9; border-width: 0 1px 1px; border-radius: 0 0 6px 0; }
.st.cur { width: 85px; background: #fff; border: 0; font-weight: 700; clip-path: polygon(0 0, 100% 0, 93% 100%, 6% 100%); }
.newtab { margin-left: -4px; }
.hscroll { margin-left: auto; width: calc(40% + 3px); display: flex; align-items: center; height: 16px; padding-right: 4px; background: #7895c0; }
.split { width: 8px; height: 14px; background: #fff; border: 1px solid #7895c0; box-shadow: inset 2px 0 0 #fff, inset 3px 0 0 #5c7fb2; }
.la, .ra { width: 5px; height: 8px; background: #3a4d78; clip-path: polygon(100% 0, 100% 100%, 0 50%); margin: 0 7px 0 5px; }
.ra { clip-path: polygon(0 0, 100% 50%, 0 100%); }
.track { flex: 1; }
.thumb { width: 85%; height: 15px; display: flex; align-items: center; justify-content: center; gap: 1px; background: linear-gradient(#f3f5f9, #dce2eb 45%, #bec9da 50%, #aebdd3); border: 1px solid #556b8f; }
.thumb i { width: 1px; height: 7px; background: #6d7b91; }

.status { flex: none; display: flex; justify-content: space-between; height: 19px; background: linear-gradient(#dceafd, #c3dafa 40%, #b0cef6 45%, #cfe3fd); color: #15284f; }
.ready { width: 45px; padding: 3px 0 0 5px; border-right: 1px solid #8fb0dd; }
.tools { display: flex; align-items: center; width: 230px; padding-left: 4px; overflow: hidden; border-left: 2px solid #5d87bd; background: linear-gradient(#b9d5fb, #8fb6ec 50%, #7ba2dd); }
.views { display: flex; flex: none; width: 55px; height: 18px; border: 1px solid #6089c4; background: #b5cdec; }
.views button { flex: 1; display: flex; align-items: center; justify-content: center; border-right: 1px solid #9ab7df; }
.views .on { background: linear-gradient(#fddcab, #ffb957 50%, #ffe27e); }
.pct { flex: none; width: 45px; }
.zb { flex: none; width: 16px; height: 16px; border-radius: 50%; border: 1px solid #3e5987; background: linear-gradient(#37517f, #37517f) center / 7px 2px no-repeat, linear-gradient(#fff, #c5d2e8); }
.zoom { flex: none; display: flex; width: 102px; }
.zoom input { appearance: none; width: 100%; height: 16px; background: linear-gradient(#5a7cae, #5a7cae) 0 7px / 100% 1px no-repeat, linear-gradient(#dbe8fb, #dbe8fb) 0 8px / 100% 1px no-repeat; }
.zoom input::-webkit-slider-thumb { appearance: none; width: 9px; height: 13px; background: linear-gradient(90deg, #3f5f92 1px, #fff 1px, #fff 3px, #6f8fc4 4px, #fff 6px, #fff 8px, #3f5f92 8px); border-top: 1px solid #3f5f92; clip-path: polygon(0 0, 100% 0, 100% 65%, 50% 100%, 0 65%); }
```
